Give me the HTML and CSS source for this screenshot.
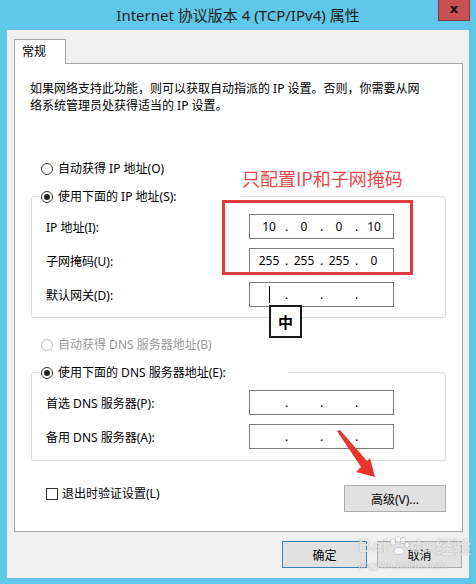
FILE: index.html
```html
<!DOCTYPE html>
<html lang="zh-CN">
<head>
    <meta charset="UTF-8">
    <meta name="viewport" content="width=device-width, initial-scale=1.0">
    <title>Internet 协议版本 4 (TCP/IPv4) 属性</title>
    <link rel="stylesheet" href="styles.css">
</head>
<body>
    <div class="window">
        <div class="titlebar">
            <div class="title">Internet 协议版本 4 (TCP/IPv4) 属性</div>
            <div class="close">x</div>
        </div>

        <div class="client">
            <div class="tab">常规</div>
            <div class="panel">
                <p class="desc">如果网络支持此功能，则可以获取自动指派的 IP 设置。否则，你需要从网<br>络系统管理员处获得适当的 IP 设置。</p>

                <div class="option"><span class="radio"></span>自动获得 IP 地址(O)</div>

                <fieldset class="group">
                    <legend class="legend-ip"><span class="option-inline"><span class="radio checked"></span>使用下面的 IP 地址(S):</span></legend>
                    <div class="rows">
                        <label>IP 地址(I):</label>
                        <div class="ipbox">
                            <span class="seg">10</span><span class="dot">.</span><span class="seg">0</span><span class="dot">.</span><span class="seg">0</span><span class="dot">.</span><span class="seg">10</span>
                        </div>
                        <label>子网掩码(U):</label>
                        <div class="ipbox">
                            <span class="seg">255</span><span class="dot">.</span><span class="seg">255</span><span class="dot">.</span><span class="seg">255</span><span class="dot">.</span><span class="seg">0</span>
                        </div>
                        <label>默认网关(D):</label>
                        <div class="ipbox">
                            <span class="seg"><span class="caret"></span></span><span class="dot">.</span><span class="seg"></span><span class="dot">.</span><span class="seg"></span><span class="dot">.</span><span class="seg"></span>
                        </div>
                    </div>
                </fieldset>

                <div class="option option-dns disabled"><span class="radio"></span>自动获得 DNS 服务器地址(B)</div>

                <fieldset class="group group-dns">
                    <legend class="legend-dns"><span class="option-inline"><span class="radio checked"></span>使用下面的 DNS 服务器地址(E):</span></legend>
                    <div class="rows">
                        <label>首选 DNS 服务器(P):</label>
                        <div class="ipbox">
                            <span class="seg"></span><span class="dot">.</span><span class="seg"></span><span class="dot">.</span><span class="seg"></span><span class="dot">.</span><span class="seg"></span>
                        </div>
                        <label>备用 DNS 服务器(A):</label>
                        <div class="ipbox">
                            <span class="seg"></span><span class="dot">.</span><span class="seg"></span><span class="dot">.</span><span class="seg"></span><span class="dot">.</span><span class="seg"></span>
                        </div>
                    </div>
                </fieldset>

                <div class="panel-footer">
                    <div class="check-row"><span class="checkbox"></span>退出时验证设置(L)</div>
                    <button class="btn btn-advanced">高级(V)...</button>
                </div>
            </div>

            <div class="dialog-buttons">
                <button class="btn btn-default">确定</button>
                <button class="btn">取消</button>
            </div>
        </div>

        <!-- annotations drawn over the screenshot -->
        <div class="callout">只配置IP和子网掩码</div>
        <div class="redbox"></div>
        <div class="ime">中</div>
        <svg class="arrow" width="476" height="584" viewBox="0 0 476 584">
            <polygon points="337,431 340,430 367,461 370,458 375,477 356,472 361,467" fill="#e8352e"/>
        </svg>
        <div class="watermark">
            <div class="wm-logo">Bai<svg class="paw" width="22" height="20" viewBox="0 0 22 20">
                <ellipse cx="5" cy="6" rx="2.6" ry="3.2"/>
                <ellipse cx="10" cy="3.5" rx="2.6" ry="3.2"/>
                <ellipse cx="15" cy="4.5" rx="2.6" ry="3.2"/>
                <ellipse cx="19" cy="9" rx="2.4" ry="3"/>
                <path d="M6 16 C6 10 15 10 16 15 C17 19 7 20 6 16 Z"/>
            </svg>du<span class="wm-cn">经验</span></div>
            <div class="wm-url">jingyan.baidu.com</div>
        </div>
    </div>
</body>
</html>
```

FILE: styles.css
```css
body {
    margin: 0;
    font-family: "Noto Sans", "Noto Sans CJK SC", sans-serif;
    font-size: 12px;
    color: #000;
}
.window {
    position: relative;
    width: 476px;
    height: 584px;
    background: #60c7e8;
    overflow: hidden;
}
.titlebar {
    display: grid;
    grid-template-columns: 1fr auto 1fr;
    height: 30px;
}
.title {
    grid-column: 2;
    font-size: 15px;
    line-height: 30px;
    color: #1e1e1e;
    white-space: nowrap;
}
.close {
    grid-column: 3;
    justify-self: end;
    align-self: start;
    width: 32px;
    height: 21px;
    margin-right: 6px;
    box-sizing: border-box;
    background: #c75050;
    border: 1px solid #7e3a3a;
    border-top: none;
    text-align: center;
    font-family: "DejaVu Sans", sans-serif;
    font-weight: bold;
    font-size: 13px;
    line-height: 18px;
    color: #111;
}
.client {
    height: 548px;
    margin: 0 7px;
    padding: 9px 6px 0 7px;
    box-sizing: border-box;
    background: #f0f0f0;
}
.tab {
    position: relative;
    z-index: 1;
    width: 52px;
    height: 25px;
    margin-bottom: -1px;
    padding-left: 7px;
    box-sizing: border-box;
    background: #fff;
    border: 1px solid #a5a5a5;
    border-bottom: none;
    line-height: 24px;
}
.panel {
    height: 469px;
    box-sizing: border-box;
    background: #fff;
    border: 1px solid #a5a5a5;
}
.desc {
    margin: 16px 0 0 15px;
    line-height: 17px;
}
.option {
    display: flex;
    align-items: center;
    margin: 46px 0 0 26px;
    line-height: 17px;
}
.option-dns {
    margin-top: 18px;
}
.option-inline {
    display: flex;
    align-items: center;
    line-height: 17px;
}
.disabled {
    color: #9a9a9a;
}
.radio {
    position: relative;
    display: inline-block;
    width: 12px;
    height: 12px;
    margin-right: 5px;
    box-sizing: border-box;
    border: 1px solid #333;
    border-radius: 50%;
    background: #fff;
}
.disabled .radio {
    border-color: #bcbcbc;
}
.radio.checked::after {
    content: "";
    position: absolute;
    left: 2px;
    top: 2px;
    width: 6px;
    height: 6px;
    border-radius: 50%;
    background: #222;
}
.group {
    margin: 11px 16px 0;
    padding: 9px 0 10px;
    border: 1px solid #dcdcdc;
    border-radius: 3px;
    min-width: 0;
}
.group-dns {
    padding-bottom: 11px;
}
.group legend {
    margin-left: 8px;
    padding: 0 0 0 1px;
    box-sizing: border-box;
    background: #fff;
}
.legend-ip {
    width: 201px;
}
.legend-dns {
    width: 248px;
}
.rows {
    display: grid;
    grid-template-columns: 203px 145px;
    row-gap: 9px;
    align-items: center;
    margin-left: 14px;
}
.ipbox {
    display: flex;
    align-items: center;
    height: 25px;
    padding-left: 3px;
    box-sizing: border-box;
    border: 1px solid #7a7a7a;
    background: #fff;
}
.seg {
    display: flex;
    justify-content: center;
    align-items: center;
    width: 32px;
    height: 17px;
}
.dot {
    display: flex;
    justify-content: center;
    width: 3px;
}
.caret {
    width: 1px;
    height: 17px;
    background: #000;
}
.panel-footer {
    display: flex;
    justify-content: space-between;
    align-items: flex-start;
    margin: 24px 16px 0 31px;
}
.check-row {
    display: flex;
    align-items: center;
    line-height: 17px;
}
.checkbox {
    width: 12px;
    height: 12px;
    margin-right: 4px;
    box-sizing: border-box;
    border: 1px solid #333;
    background: #fff;
}
.btn {
    height: 27px;
    padding: 0;
    font-family: inherit;
    font-size: 12px;
    color: #000;
    background: #e1e1e1;
    border: 1px solid #adadad;
}
.btn-advanced {
    width: 102px;
}
.dialog-buttons {
    display: flex;
    justify-content: flex-end;
    gap: 10px;
    margin: 9px 1px 0 0;
}
.dialog-buttons .btn {
    width: 85px;
}
.btn-default {
    border-color: #3c7fb1;
}

/* annotations */
.callout {
    position: absolute;
    left: 242px;
    top: 168px;
    font-family: "Noto Sans CJK SC", sans-serif;
    font-size: 18px;
    line-height: 20px;
    color: #e84848;
}
.redbox {
    position: absolute;
    left: 222px;
    top: 200px;
    width: 191px;
    height: 75px;
    box-sizing: border-box;
    border: 3px solid #e23b3b;
}
.ime {
    position: absolute;
    left: 269px;
    top: 305px;
    width: 33px;
    height: 33px;
    box-sizing: border-box;
    border: 2px solid #1a1a1a;
    background: #fff;
    font-family: "Noto Sans CJK SC", sans-serif;
    font-weight: bold;
    font-size: 15px;
    line-height: 29px;
    text-align: center;
}
.arrow {
    position: absolute;
    left: 0;
    top: 0;
    pointer-events: none;
}
.watermark {
    position: absolute;
    left: 358px;
    top: 535px;
    color: rgba(255, 255, 255, 0.75);
    text-shadow: 0 0 1px rgba(0, 0, 0, 0.35);
    pointer-events: none;
}
.wm-logo {
    display: flex;
    align-items: center;
    font-family: "Liberation Sans", sans-serif;
    font-weight: bold;
    font-size: 19px;
    line-height: 22px;
}
.wm-cn {
    font-family: "Noto Sans CJK SC", sans-serif;
    font-size: 18px;
    margin-left: 2px;
}
.paw {
    fill: rgba(255, 255, 255, 0.75);
    stroke: rgba(0, 0, 0, 0.18);
    stroke-width: 0.8;
}
.wm-url {
    font-family: "Liberation Sans", sans-serif;
    font-size: 11px;
    line-height: 13px;
    margin-top: 2px;
}
```
